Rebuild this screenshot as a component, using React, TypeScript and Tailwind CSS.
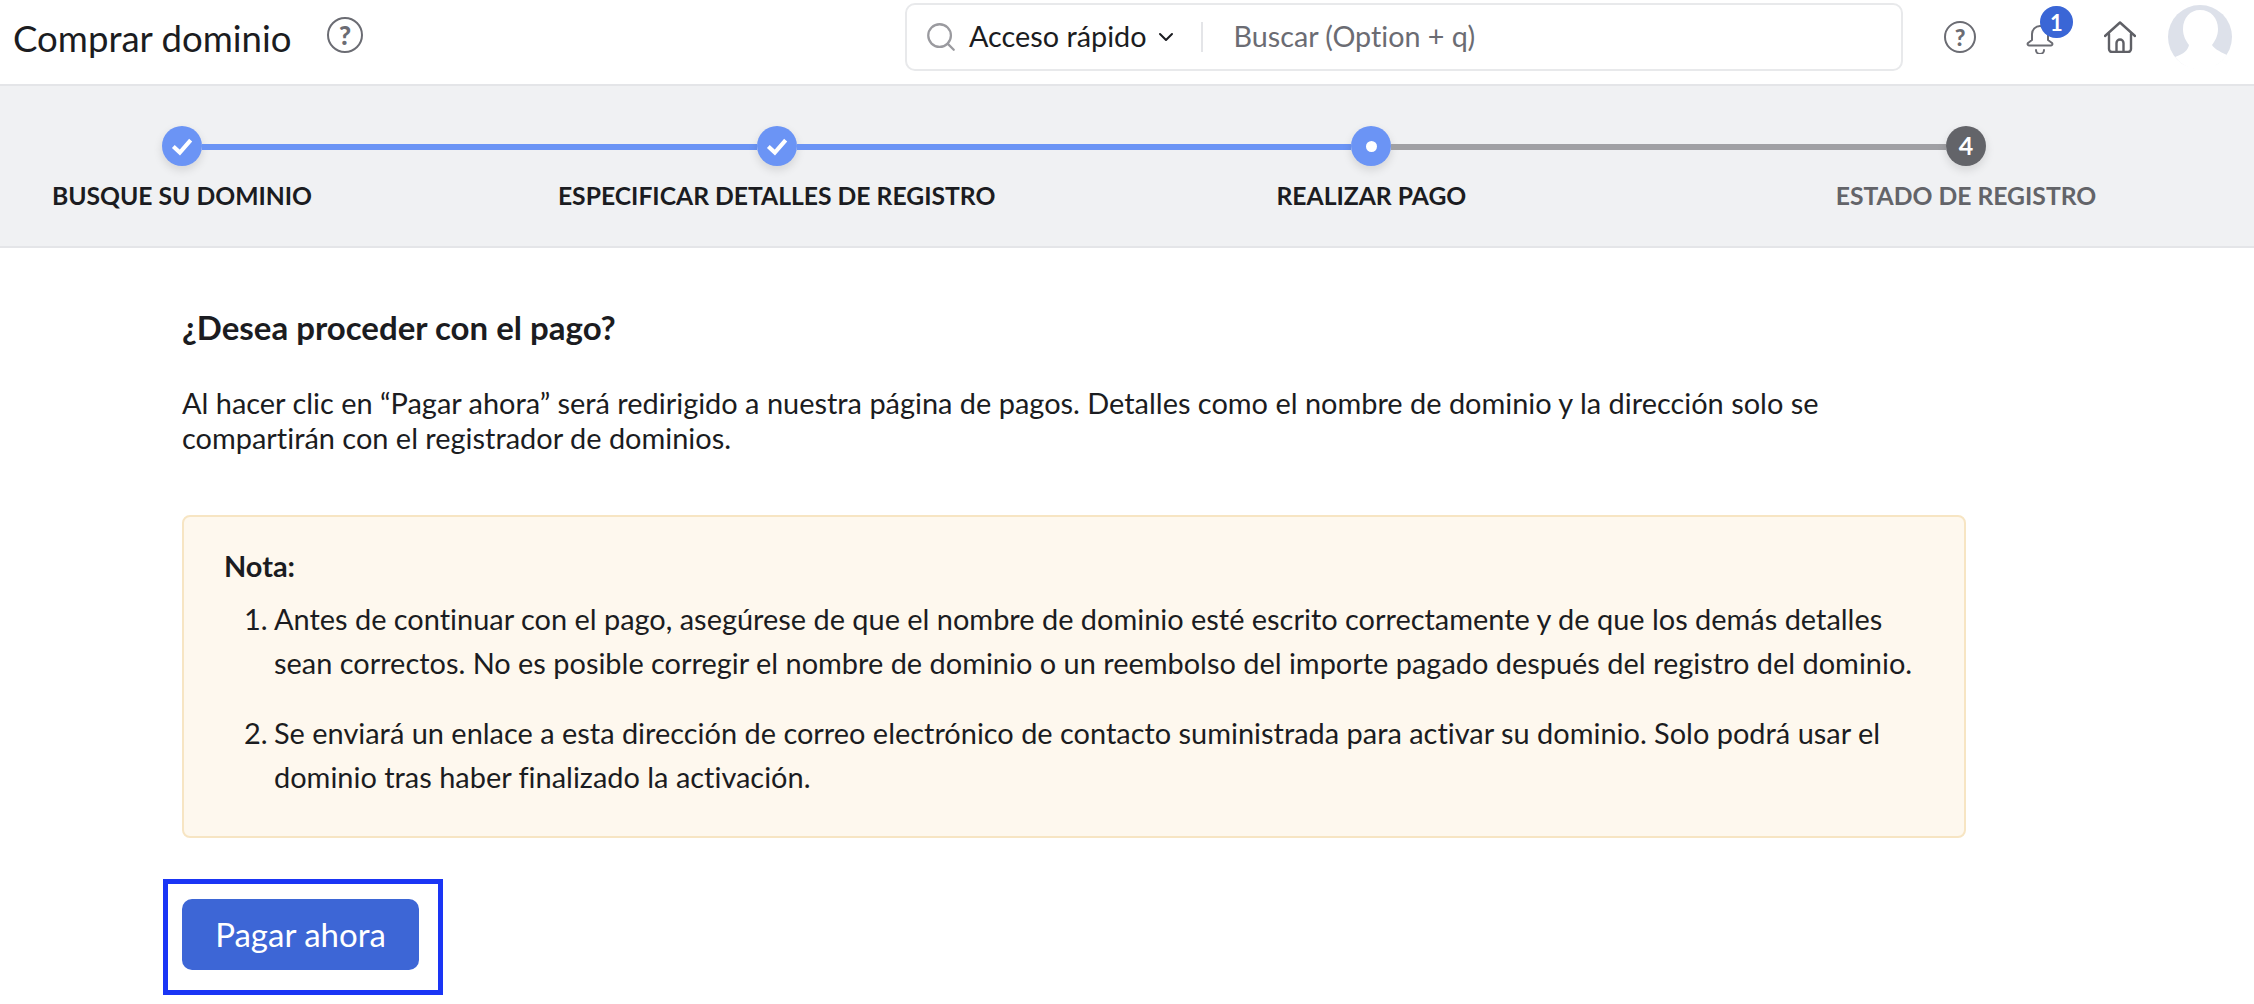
import { ChevronDown, Search } from 'lucide-react';

const font = { fontFamily: 'Lato, sans-serif' };

function HelpIcon({ className }: { className: string }) {
  return (
    <div className={`flex items-center justify-center rounded-full border-2 border-[#6b6c73] text-[#6b6c73] font-black ${className}`}>
      ?
    </div>
  );
}

function Step({ label, state, num }: { label: string; state: 'done' | 'current' | 'todo'; num?: number }) {
  const bg = state === 'todo' ? 'bg-[#636469]' : 'bg-[#6b94f5]';
  return (
    <div className="flex w-10 shrink-0 flex-col items-center">
      <div className={`flex h-10 w-10 items-center justify-center rounded-full shadow-[0_4px_10px_rgba(0,0,0,0.12)] ${bg}`}>
        {state === 'done' && (
          <svg viewBox="0 0 24 24" className="h-[26px] w-[26px]" fill="none" stroke="#fff" strokeWidth="3.800">
            <path d="M4 12.500 10 18 20 6.500" />
          </svg>
        )}
        {state === 'current' && <div className="h-[11px] w-[11px] rounded-full bg-white" />}
        {state === 'todo' && <span className="text-[25px] font-bold text-white">{num}</span>}
      </div>
      <div className={`mt-[15px] whitespace-nowrap text-[24.700px] leading-[30px] font-bold ${state === 'todo' ? 'text-[#636469]' : 'text-[#1b1c21]'}`}>
        {label}
      </div>
    </div>
  );
}

export default function App() {
  return (
    <div className="h-[1004px] w-[2254px] overflow-hidden bg-white text-[#1b1c21] [font-variant-ligatures:none]" style={font}>
      {/* Header */}
      <header className="flex h-[86px] items-start border-b-2 border-[#e4e5e8]">
        <h1 className="mt-[17px] ml-[13px] w-[279px] text-[36.600px] leading-[42px] font-normal whitespace-nowrap">Comprar dominio</h1>
        <HelpIcon className="mt-[17px] ml-[35px] h-[36px] w-[36px] text-[26px]" />
        <div className="mt-[3px] ml-[542px] flex h-[68px] w-[998px] items-center rounded-[10px] border-2 border-[#e8e9eb] pl-[17px]">
          <Search className="h-[34px] w-[34px] text-[#9a9a9f]" strokeWidth={1.6} />
          <span className="ml-[11px] text-[28.800px]">Acceso rápido</span>
          <ChevronDown className="ml-[7px] h-[24px] w-[24px]" strokeWidth={2} />
          <div className="ml-[23px] h-[30px] w-[2px] bg-[#e4e5e8]" />
          <span className="ml-[31px] text-[28.700px] text-[#6b6c73]">Buscar (Option + q)</span>
        </div>
        <HelpIcon className="mt-[21px] ml-[41px] h-[32px] w-[32px] text-[23px]" />
        <div className="relative mt-[20px] ml-[50px] h-[34px] w-[28px]">
          <svg viewBox="0 0 28 34" className="h-[34px] w-[28px]" fill="none" stroke="#6b6c73" strokeWidth="2" strokeLinecap="round" strokeLinejoin="round">
            <path d="M6 20V14a8 8 0 0 1 16 0v6l4 3a1.500 1.500 0 0 1-1 2.500H3a1.500 1.500 0 0 1-1-2.500z" />
            <path d="M10 30a4 4 0 0 0 8 0" />
          </svg>
          <div className="absolute -top-[14px] left-[14px] flex h-[32px] w-[33px] items-center justify-center rounded-full bg-[#3a66d6] text-[22px] font-bold text-white">
            1
          </div>
        </div>
        <svg viewBox="0 0 32 32" className="mt-[21px] ml-[50px] h-[32px] w-[32px]" fill="none" stroke="#5f6066" strokeWidth="2.400" strokeLinecap="round" strokeLinejoin="round">
          <path d="M1 15 16 1.500 31 15" />
          <path d="M5 13v15a3 3 0 0 0 3 3h16a3 3 0 0 0 3-3V13" />
          <path d="M12.500 31V22a3.500 3.500 0 0 1 7 0v9" />
        </svg>
        <svg viewBox="0 0 64 64" className="mt-[5px] ml-[32px] h-[64px] w-[64px]">
          <circle cx="32" cy="32" r="32" fill="#dde1ea" />
          <path d="M32 5c11 0 18 8 18 19 0 7-3 12-6 16 2 3 6 6 15 10A32 32 0 0 1 7 52c9-3 13-7 14-12-3-4-6-9-6-16 0-11 7-19 17-19z" fill="#ffffff" />
        </svg>
      </header>

      {/* Stepper */}
      <div className="flex h-[162px] border-b-2 border-[#e4e5e8] bg-[#f0f1f3] pt-[40px] pr-[268px] pl-[162px]">
        <Step label="BUSQUE SU DOMINIO" state="done" />
        <div className="mt-[18px] h-[6px] flex-1 bg-[#6b94f5]" />
        <Step label="ESPECIFICAR DETALLES DE REGISTRO" state="done" />
        <div className="mt-[18px] h-[6px] flex-1 bg-[#6b94f5]" />
        <Step label="REALIZAR PAGO" state="current" />
        <div className="mt-[18px] h-[6px] flex-1 bg-[#a0a0a4]" />
        <Step label="ESTADO DE REGISTRO" state="todo" num={4} />
      </div>

      {/* Content */}
      <main className="pl-[182px]">
        <h2 className="mt-[60px] text-[33px] leading-[38px] font-bold">¿Desea proceder con el pago?</h2>
        <p className="mt-[39px] w-[1784px] text-[28.930px] leading-[35px]">
          Al hacer clic en “Pagar ahora” será redirigido a nuestra página de pagos. Detalles como el nombre de dominio y la dirección solo se
          <br />
          compartirán con el registrador de dominios.
        </p>
        <div className="mt-[60px] h-[323px] w-[1784px] rounded-[8px] border-2 border-[#f7e5c3] bg-[#fef8ee] pt-[31px] pl-[40px]">
          <div className="text-[28.930px] leading-[36px] font-bold">Nota:</div>
          <ol className="mt-[13px] ml-[20px] text-[28.930px] leading-[44px]">
            <li className="flex">
              <span className="w-[30px]">1.</span>
              <span>
                Antes de continuar con el pago, asegúrese de que el nombre de dominio esté escrito correctamente y de que los demás detalles
                <br />
                sean correctos. No es posible corregir el nombre de dominio o un reembolso del importe pagado después del registro del dominio.
              </span>
            </li>
            <li className="mt-[26px] flex">
              <span className="w-[30px]">2.</span>
              <span>
                Se enviará un enlace a esta dirección de correo electrónico de contacto suministrada para activar su dominio. Solo podrá usar el
                <br />
                dominio tras haber finalizado la activación.
              </span>
            </li>
          </ol>
        </div>
        <div className="mt-[41px] -ml-[19px] w-[280px] border-[5px] border-[#1a35f5] pt-[15px] pr-[19px] pb-[20px] pl-[14px]">
          <button className="flex h-[71px] w-[237px] items-center justify-center rounded-[10px] bg-[#3d66d6] text-[33px] text-white">
            Pagar ahora
          </button>
        </div>
      </main>
    </div>
  );
}
